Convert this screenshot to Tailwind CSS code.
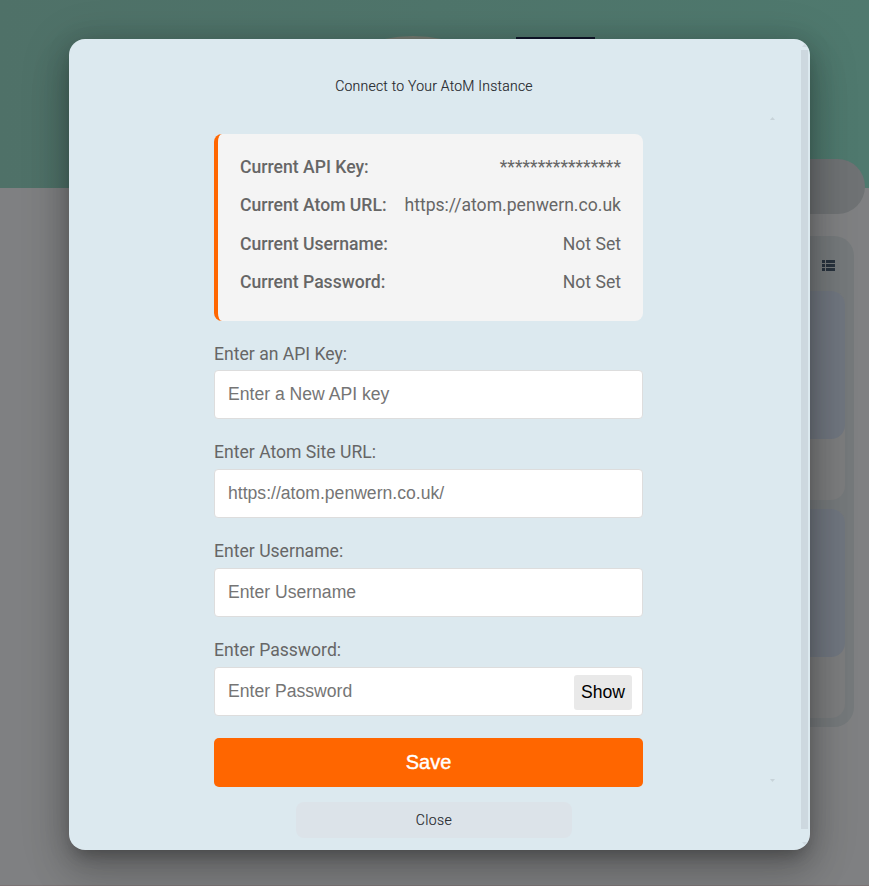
<!DOCTYPE html>
<html lang="en">
<head>
<meta charset="utf-8">
<title>Connect to AtoM</title>
<script src="https://cdn.jsdelivr.net/npm/@tailwindcss/browser@4"></script>
</head>
<body class="relative h-[886px] w-[869px] overflow-hidden bg-[#7f8082] font-[Roboto,sans-serif]">
  <!-- Dimmed page -->
  <div class="flex h-[886px] flex-col border-b border-[#7b7374]" aria-hidden="true">
    <header class="flex h-[188px] shrink-0 items-start bg-linear-to-r from-[#4f7168] to-[#4f796e] pt-9">
      <div class="ml-[339px] h-20 w-[148px] rounded-[50%] bg-[#747b71]"></div>
      <div class="mt-px ml-[29px] h-10 w-[79px] bg-[#10172b]"></div>
    </header>
    <div class="relative z-10 -mt-[29px] ml-auto mr-1 h-[55px] w-[300px] shrink-0 rounded-full bg-[#6f7274]"></div>
    <section class="ml-auto mr-[15px] mt-[22px] flex h-[491px] w-[300px] shrink-0 flex-col gap-[9px] rounded-[20px] bg-[#75797b] pr-[9px]">
      <div class="-mb-[9px] flex h-[55px] shrink-0 items-start justify-end pt-6 pr-[10px]">
        <svg width="13" height="11" viewBox="0 0 13 11" fill="#29333e"><path d="M0 0h3v3H0zM4 0h9v3H4zM0 4h3v3H0zM4 4h9v3H4zM0 8h3v3H0zM4 8h9v3H4z"/></svg>
      </div>
      <div class="h-[209px] shrink-0 rounded-[14px] bg-[#7c7d7e]"><div class="h-[148px] rounded-[14px] bg-[#70767f]"></div></div>
      <div class="h-[209px] shrink-0 rounded-[14px] bg-[#7c7d7e]"><div class="h-[148px] rounded-[14px] bg-[#70767f]"></div></div>
    </section>
  </div>

  <!-- Dialog -->
  <div class="absolute inset-0 z-20 flex items-start pl-[69px] pt-[39px]">
    <main role="dialog" class="relative flex h-[811px] w-[741px] flex-col rounded-[16px] bg-[#dce9ef] shadow-[0_11px_15px_-7px_rgba(0,0,0,0.2),0_24px_38px_3px_rgba(0,0,0,0.14),0_9px_46px_8px_rgba(0,0,0,0.12),0_3px_24px_0_rgba(0,0,0,0.13)]">
      <h1 class="mt-[37px] h-[20px] pr-[11px] text-center text-[14px] font-light leading-[20px] tracking-[0.23px] text-[#1f262b] [-webkit-text-stroke:0.15px_#1f262b]">Connect to Your AtoM Instance</h1>
      <form class="ml-[145px] mt-[38px] flex w-[429px] flex-col text-[17.6px] text-[#666]">
        <dl class="flex h-[187px] flex-col rounded-[8px] border-l-4 border-[#ff6600] bg-[#f4f4f4] pt-[14px] pr-[22px] pl-[22px] leading-[38.4px]">
          <div class="flex justify-between"><dt class="font-medium">Current API Key:</dt><dd>****************</dd></div>
          <div class="flex justify-between"><dt class="font-medium">Current Atom URL:</dt><dd>https://atom.penwern.co.uk</dd></div>
          <div class="flex justify-between"><dt class="font-medium">Current Username:</dt><dd>Not Set</dd></div>
          <div class="flex justify-between"><dt class="font-medium">Current Password:</dt><dd>Not Set</dd></div>
        </dl>
        <label class="mt-[21px] h-[28px] leading-[24px]">Enter an API Key:</label>
        <input class="h-[49px] rounded-[4px] border border-[#ddd] bg-white px-[13px] font-['Liberation_Sans',sans-serif] placeholder:text-[#757575]" placeholder="Enter a New API key">
        <label class="mt-[21px] h-[29px] leading-[24px]">Enter Atom Site URL:</label>
        <input class="h-[49px] rounded-[4px] border border-[#ddd] bg-white px-[13px] font-['Liberation_Sans',sans-serif] placeholder:text-[#757575]" placeholder="https://atom.penwern.co.uk/">
        <label class="mt-[21px] h-[29px] leading-[24px]">Enter Username:</label>
        <input class="h-[49px] rounded-[4px] border border-[#ddd] bg-white px-[13px] font-['Liberation_Sans',sans-serif] placeholder:text-[#757575]" placeholder="Enter Username">
        <label class="mt-[21px] h-[29px] leading-[24px]">Enter Password:</label>
        <div class="flex h-[49px] items-start rounded-[4px] border border-[#ddd] bg-white pr-[10px] pl-[13px] font-['Liberation_Sans',sans-serif]">
          <input class="h-[47px] min-w-0 flex-1 placeholder:text-[#757575]" placeholder="Enter Password">
          <button type="button" class="mt-[7px] h-[35px] w-[58px] rounded-[3px] bg-[#e9e9e9] text-black">Show</button>
        </div>
        <button type="button" class="mt-[22px] h-[49px] rounded-[5px] bg-[#ff6600] pb-[2px] font-['Liberation_Sans',sans-serif] text-[20px] text-white [-webkit-text-stroke:0.4px_white]">Save</button>
      </form>
      <button type="button" class="ml-[227px] mt-[15px] h-[36px] w-[276px] rounded-[8px] bg-[#dce3e9] text-[14px] font-light tracking-[0.4px] text-[#1f262b] [-webkit-text-stroke:0.15px_#1f262b]">Close</button>

      <!-- Scrollbars -->
      <div class="absolute top-[11px] right-[2px] h-[779px] w-[7px] bg-[#cdd8df]"></div>
      <svg class="absolute top-[78px] right-[35px]" width="5" height="3" fill="#c8d3d9"><path d="M0 3 2.5 0 5 3z"/></svg>
      <svg class="absolute top-[740px] right-[35px]" width="5" height="3" fill="#c8d3d9"><path d="M0 0h5L2.5 3z"/></svg>
      <svg class="absolute top-[5px] right-[3px]" width="5" height="3" fill="#cdd8df"><path d="M0 3 2.5 0 5 3z"/></svg>
      <svg class="absolute top-[803px] right-[3px]" width="5" height="3" fill="#cdd8df"><path d="M0 0h5L2.5 3z"/></svg>
    </main>
  </div>
</body>
</html>
